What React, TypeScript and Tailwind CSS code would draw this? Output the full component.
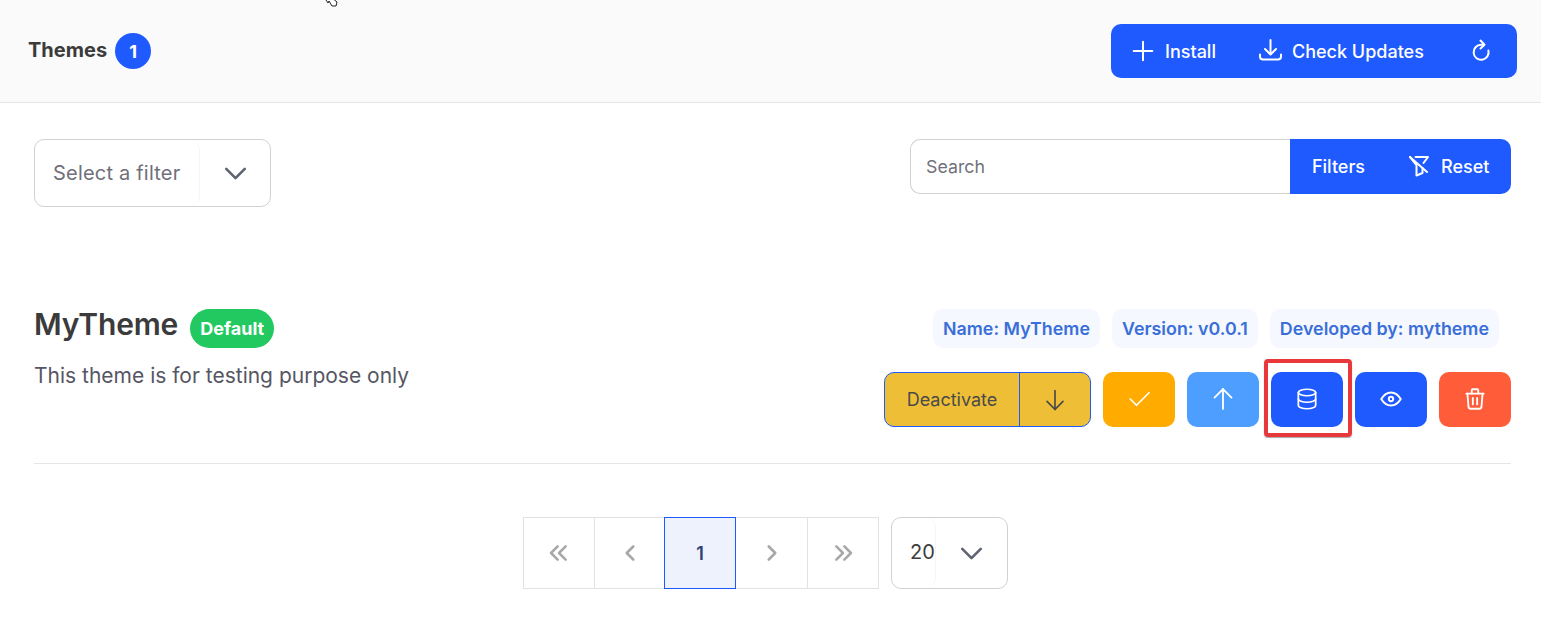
import React from "react";
import { TbPlus, TbDatabase, TbEye, TbTrash, TbArrowDown, TbArrowUp, TbCheck, TbChevronDown, TbChevronsLeft, TbChevronLeft, TbChevronRight, TbChevronsRight } from "react-icons/tb";

function Tag({ children }: { children: React.ReactNode }) {
  return <span className="flex h-[39px] items-center rounded-[10px] bg-[#f5f8ff] px-[10px] pt-[2px] text-[17.85px] font-semibold text-[#3a6fd8]">{children}</span>;
}

function Square({ className, children }: { className: string; children: React.ReactNode }) {
  return <button className={`flex h-[55px] w-[72px] items-center justify-center rounded-[10px] pb-[2px] text-white ${className}`}>{children}</button>;
}

function Select({ w, inner, label, textClass }: { w: string; inner: string; label: string; textClass: string }) {
  return (
    <div className={`flex items-stretch rounded-[10px] border border-[#d1d1d1] bg-white ${w}`}>
      <div className={`flex items-center rounded-[10px] border-r border-[#f5f5f5] pl-[18px] ${inner} ${textClass}`}>{label}</div>
      <div className="flex flex-1 items-center justify-center text-[#5f6473]"><TbChevronDown size={37} strokeWidth={1.7} /></div>
    </div>
  );
}

function Page({ className, children }: { className: string; children: React.ReactNode }) {
  return <div className={`flex h-[72px] items-center justify-center border ${className}`}>{children}</div>;
}

const pageBase = "border-[#e2e2e2] text-[#a8a8a8]";

export default function App() {
  return (
    <div className="relative h-[631px] w-full overflow-hidden bg-white font-['Inter',sans-serif] text-[#3c3c3c]">
      <header className="flex h-[103px] items-center justify-between border-b border-[#e5e5e5] bg-[#fafafa] pl-[28px] pr-[24px]">
        <div className="flex items-center gap-[8px]">
          <span className="mb-[2px] text-[20px] font-bold text-[#3b3b3b]">Themes</span>
          <span className="flex h-9 w-9 items-center justify-center rounded-full bg-[#1f5aff] text-[18px] font-bold text-white">1</span>
        </div>
        <div className="flex h-[54px] items-center rounded-[10px] bg-[#1f5aff] text-[18px] font-medium text-white">
          <div className="flex h-full w-[127px] items-center gap-[6px] pl-[16px]"><TbPlus size={32} strokeWidth={1.5} />Install</div>
          <div className="flex h-full w-[207px] items-center gap-[5px] pl-[17px]">
            <svg width="32" height="32" viewBox="0 0 32 32" fill="none" stroke="currentColor" strokeWidth="2" strokeLinecap="round" strokeLinejoin="round">
              <path d="M15.5 5V19" />
              <path d="M10 14L15.5 19.5L21 14" />
              <path d="M5 19.5V21.5A3 3 0 0 0 8 24.5H23A3 3 0 0 0 26 21.5V19.5" />
            </svg>
            Check Updates
          </div>
          <div className="flex h-full w-[72px] items-center justify-center">
            <svg width="32" height="32" viewBox="0 0 32 32" fill="none" stroke="currentColor" strokeWidth="2" strokeLinecap="round" strokeLinejoin="round">
              <path d="M19 9.8H16A7.5 7.5 0 1 0 23.4 15.5" />
              <path d="M15.5 5.5L19.5 9.8L15.5 13.5" />
            </svg>
          </div>
        </div>
      </header>

      <main className="pl-[34px] pr-[30px] pt-[36px]">
        <div className="flex items-start justify-between">
          <Select w="h-[68px] w-[237px]" inner="w-[165px]" label="Select a filter" textClass="text-[20px] tracking-[0.2px] text-[#6f6f7b]" />
          <div className="flex h-[55px] items-stretch">
            <div className="flex w-[380px] items-center rounded-l-[10px] border border-r-0 border-[#d1d1d1] bg-white pl-[15px] pt-px text-[17.8px] text-[#71717a]">Search</div>
            <div className="flex items-center rounded-r-[10px] bg-[#1f5aff] text-[18px] font-medium text-white">
              <div className="flex h-full w-[97px] items-center justify-center">Filters</div>
              <div className="flex h-full w-[124px] items-center gap-[6px] pl-[16px]">
                <svg width="32" height="32" viewBox="0 0 32 32" fill="none" stroke="currentColor" strokeWidth="2" strokeLinecap="round" strokeLinejoin="round">
                  <path d="M7 6L24 21" />
                  <path d="M7 6L13.5 14V24.5L19.5 22V17" />
                  <path d="M12.5 6H25L20.5 12" />
                </svg>
                Reset
              </div>
            </div>
          </div>
        </div>

        <section className="mt-[102px] flex items-start justify-between border-b border-[#e5e5e5] pb-[36px]">
          <div>
            <div className="flex h-[39px] items-center gap-[12px]">
              <h2 className="mt-[-8px] text-[30px] font-semibold tracking-[-0.15px] text-[#3b3b3b]">MyTheme</h2>
              <span className="flex h-[39px] items-center rounded-full bg-[#22c960] px-[10px] text-[18px] font-bold text-white">Default</span>
            </div>
            <p className="mt-[12px] text-[21px] text-[#565663]">This theme is for testing purpose only</p>
          </div>
          <div className="flex flex-col items-end">
            <div className="mr-[12px] flex gap-[12px]">
              <Tag>Name: MyTheme</Tag>
              <Tag>Version: v0.0.1</Tag>
              <Tag>Developed by: mytheme</Tag>
            </div>
            <div className="relative mt-[24px] flex gap-[12px]">
              <div className="flex h-[55px] w-[207px] rounded-[10px] border border-[#1f5aff] bg-[#eebf36] text-[#4a4a4a]">
                <div className="flex w-[135px] items-center justify-center border-r border-[#1f5aff] text-[18px]">Deactivate</div>
                <div className="flex flex-1 items-center justify-center"><TbArrowDown size={32} strokeWidth={1.25} /></div>
              </div>
              <Square className="bg-[#ffab00]"><TbCheck size={30} strokeWidth={1.4} /></Square>
              <Square className="bg-[#4d9eff]"><TbArrowUp size={34} strokeWidth={1.3} /></Square>
              <Square className="bg-[#1f5aff]"><TbDatabase size={26} strokeWidth={1.6} /></Square>
              <Square className="bg-[#1f5aff]"><TbEye size={26} strokeWidth={1.8} /></Square>
              <Square className="bg-[#ff5c39]"><TbTrash size={26} strokeWidth={1.7} /></Square>
              <div className="pointer-events-none absolute left-[379.5px] top-[-13px] h-[78px] w-[88px] rounded-[4px] border-[4px] border-[#e8383c] shadow-[0_1px_1px_rgba(0,0,0,0.35)]" />
            </div>
          </div>
        </section>

        <nav className="flex justify-center pr-[14px] pt-[53px]">
          <Page className={`w-[72px] ${pageBase}`}><TbChevronsLeft size={32} strokeWidth={1.9} /></Page>
          <Page className={`-ml-px w-[71px] ${pageBase}`}><TbChevronLeft size={26} strokeWidth={2.4} /></Page>
          <Page className="relative z-10 -ml-px w-[72px] border-[#1f5aff] bg-[#edf2fd] text-[18px] font-semibold text-[#2f3f78]">1</Page>
          <Page className={`-ml-px w-[73px] ${pageBase}`}><TbChevronRight size={26} strokeWidth={2.4} /></Page>
          <Page className={`-ml-px w-[72px] ${pageBase}`}><TbChevronsRight size={32} strokeWidth={1.9} /></Page>
          <div className="ml-[12px]">
            <Select w="h-[72px] w-[117px]" inner="w-[44px]" label="20" textClass="pb-[2px] text-[20px] text-[#3c3c3c]" />
          </div>
        </nav>
      </main>

      <svg className="absolute left-[323px] top-0" width="16" height="7" viewBox="0 0 16 7" fill="white" stroke="#222" strokeWidth="1">
        <path d="M1 -3 L5 3 L6 1 L9 6 L13 6 L14 2 L9 -2" />
      </svg>
    </div>
  );
}
